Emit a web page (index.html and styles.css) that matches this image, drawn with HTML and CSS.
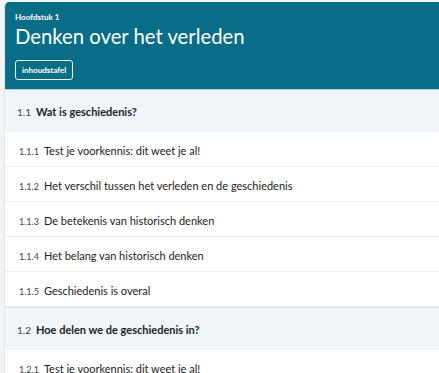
FILE: index.html
```html
<!DOCTYPE html>
<html lang="nl">
<head>
    <meta charset="UTF-8">
    <meta name="viewport" content="width=device-width, initial-scale=1.0">
    <title>Denken over het verleden</title>
    <link rel="stylesheet" href="styles.css">
</head>
<body>
    <div class="chapter">
        <header class="chapter-header">
            <div class="chapter-label">Hoofdstuk 1</div>
            <h1>Denken over het verleden</h1>
            <button class="toc-button">inhoudstafel</button>
        </header>
        <ul class="toc">
            <li class="section first"><span class="num">1.1</span>Wat is geschiedenis?</li>
            <li class="item"><span class="num">1.1.1</span>Test je voorkennis: dit weet je al!</li>
            <li class="item"><span class="num">1.1.2</span>Het verschil tussen het verleden en de geschiedenis</li>
            <li class="item"><span class="num">1.1.3</span>De betekenis van historisch denken</li>
            <li class="item"><span class="num">1.1.4</span>Het belang van historisch denken</li>
            <li class="item"><span class="num">1.1.5</span>Geschiedenis is overal</li>
            <li class="section"><span class="num">1.2</span>Hoe delen we de geschiedenis in?</li>
            <li class="item"><span class="num">1.2.1</span>Test je voorkennis: dit weet je al!</li>
        </ul>
    </div>
</body>
</html>
```

FILE: styles.css
```css
body {
    margin: 0;
    padding: 2px 0 0 4px;
    background-color: #f3f4f5;
    font-family: 'Lato', 'Noto Sans', sans-serif;
    color: #222;
}
.chapter {
    background-color: #fff;
    border-left: 1px solid #e3e6e8;
    border-top-left-radius: 5px;
    overflow: hidden;
}
.chapter-header {
    background-color: #086d87;
    color: white;
    padding: 10px 10px 9px 10px;
}
.chapter-label {
    font-size: 8px;
    font-weight: bold;
    line-height: 10px;
}
.chapter-header h1 {
    margin: 2px 0 12px 0;
    font-size: 20.3px;
    font-weight: normal;
    line-height: 24px;
}
.toc-button {
    display: block;
    background: none;
    color: white;
    border: 1px solid #e8f3f6;
    border-radius: 3px;
    font-family: inherit;
    font-size: 8px;
    font-weight: bold;
    line-height: 10px;
    height: 20px;
    padding: 0 6px;
}
.toc {
    list-style: none;
    margin: 0;
    padding: 0;
}
.toc li {
    display: flex;
    align-items: baseline;
    font-size: 11px;
    height: 12px;
    line-height: 12px;
}
.toc .num {
    font-size: 9px;
    color: #444;
    margin-right: 5px;
}
.section {
    background-color: #eff5f8;
    border-top: 1px solid #dcdfe1;
    font-weight: bold;
    padding: 16px 12px 14px 12px;
}
.section.first {
    border-top-color: #a9d6e2;
}
.section .num {
    font-weight: normal;
    font-size: 10px;
}
.item {
    padding: 13px 14px 9px 14px;
    border-bottom: 1px solid #eceeef;
}
.item:last-child {
    border-bottom: none;
}
```
